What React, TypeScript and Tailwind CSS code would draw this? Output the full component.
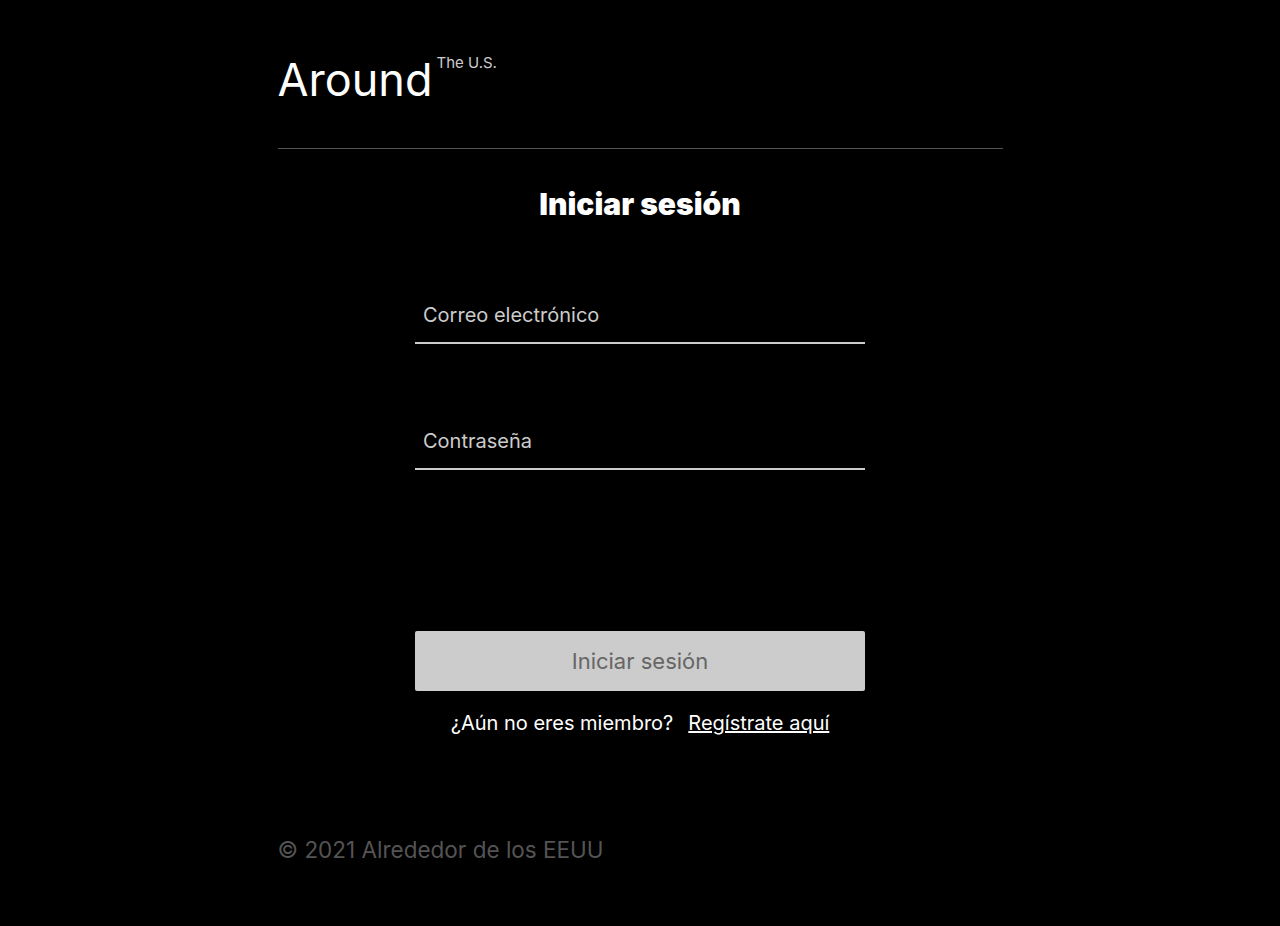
import React from "react";

export default function App() {
  return (
    <div className="min-h-[926px] bg-black text-white [font-optical-sizing:none]" style={{ fontFamily: "Inter, 'Noto Sans', sans-serif" }}>
      <div className="mx-auto w-[725px] pt-[54px]">
        <header className="flex items-start border-b border-[#545454] pb-[42px]">
          <span className="text-[45px] leading-[52px] text-white">Around</span>
          <span className="ml-[4px] mt-[0px] text-[15px] leading-[18px] text-[#cccccc]">The U.S.</span>
        </header>
        <main className="flex flex-col items-center">
          <h1 className="mt-[38px] text-[30px] font-black leading-[34px]">Iniciar sesión</h1>
          <form className="mt-[73px] flex w-[450px] flex-col">
            <input
              type="email"
              placeholder="Correo electrónico"
              className="h-[50px] border-b-2 border-[#cccccc] bg-transparent px-[8px] pb-[6px] text-[20px] text-white outline-none [font-optical-sizing:none] placeholder:text-[#cccccc]"
            />
            <input
              type="password"
              placeholder="Contraseña"
              className="mt-[76px] h-[50px] border-b-2 border-[#cccccc] bg-transparent px-[8px] pb-[6px] text-[20px] text-white outline-none [font-optical-sizing:none] placeholder:text-[#cccccc]"
            />
            <button
              type="button"
              className="mt-[161px] h-[60px] rounded-[2px] bg-[#cccccc] text-[22px] text-[#666666] [font-optical-sizing:none]"
            >
              Iniciar sesión
            </button>
            <p className="mt-[18px] text-center text-[20px] leading-[28px]">
              ¿Aún no eres miembro?
              <a href="#" className="ml-[15px] underline">Regístrate aquí</a>
            </p>
          </form>
        </main>
        <footer className="mt-[99px] text-[22.5px] leading-[28px] text-[#545454]">© 2021 Alrededor de los EEUU</footer>
      </div>
    </div>
  );
}
